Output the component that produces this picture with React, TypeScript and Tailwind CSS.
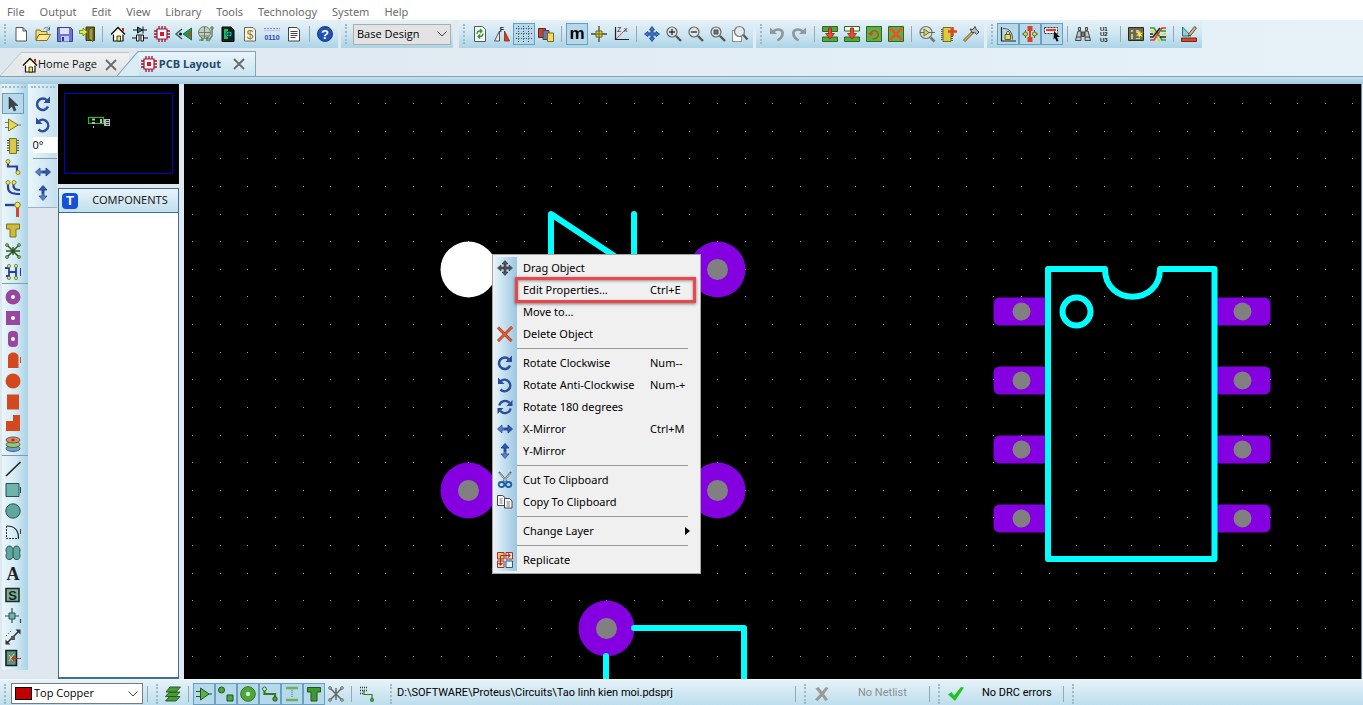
import { Fragment } from "react";
import type { ReactNode } from "react";
import clsx from "clsx";

// All glyphs are drawn on a 16x16 grid.
const icons: Record<string, ReactNode> = {
  newFile: (
    <path d="M3 1.5h7l3.5 3.5v10H3zM10 1.5V5h3.5" fill="#fff" stroke="#555" />
  ),
  open: (
    <>
      <path d="M1 4h4l1 1.500h6v3H4L1 14z" fill="#f3dd7a" stroke="#8a6d1a" />
      <path d="M4 8.500h11.500L12 14.500H1z" fill="#ffe98f" stroke="#8a6d1a" />
      <path d="M8.500 3c2-2 4-2 5.500 0M14.500 1v3h-3" fill="none" stroke="#3d6f9c" />
    </>
  ),
  save: (
    <>
      <path d="M.5 1.500h13l2 2v12H.5z" fill="#6d75d2" stroke="#3a4190" />
      <path d="M3 2h9v6H3z" fill="#dfe3fa" />
      <path d="M4 10h8v5.500H4z" fill="#c3c8f0" />
      <path d="M5 11h2v4H5z" fill="#333a80" />
    </>
  ),
  exit: (
    <>
      <path d="M7 1h8.500v13.500H7z" fill="#6b6b2a" stroke="#3a3a12" />
      <path d="M10 3l4-1.500v14L10 13z" fill="#a89a3a" stroke="#3a3a12" strokeWidth=".7" />
      <path d="M.5 4.500H4V2l4.500 4L4 10V7.500H.5z" fill="#e6ee3a" stroke="#5c7a18" strokeWidth=".8" />
    </>
  ),
  home: (
    <>
      <path d="M3.500 7.500h9.500v7.500H3.500z" fill="#fff" stroke="#111" strokeWidth="1.200" />
      <path d="M1 8.500 8 1.500l7 7" fill="#fffbe0" stroke="#111" strokeWidth="1.400" />
      <path d="M12 2h2v4l-2-2z" fill="#c22" />
      <path d="M7 10h3.500v5H7z" fill="#f3e93c" stroke="#111" strokeWidth=".8" />
    </>
  ),
  schematic: (
    <>
      <path d="M1 4h14" stroke="#111" />
      <path d="M5.500 1v6l5-3z" fill="#2e7a9c" stroke="#111" />
      <path d="M11 .5v7M0 12h5M11 12h5M8 8v1" stroke="#111" fill="none" />
      <path d="M4.500 9h2.500v6H4.500zM9 9h2.500v6H9z" fill="#fff" stroke="#111" />
    </>
  ),
  chip: (
    <>
      <path
        d="M5 0v16M8 0v16M11 0v16M0 5h16M0 8h16M0 11h16"
        stroke="#a3102a"
        strokeWidth="1.300"
      />
      <path d="M3 3h10v10H3z" fill="#fff" stroke="#a3102a" strokeWidth="1.200" />
      <path d="M6 6h4v4H6z" fill="#e0142c" />
    </>
  ),
  viewer3d: (
    <>
      <path d="M15.500 2v12L7 8z" fill="#1f9a4a" stroke="#15542c" strokeWidth=".8" />
      <path d="M15 5v6l-3-3z" fill="#d8322a" />
      <path d="M6 3 0 8l6 5M3 8h3" fill="none" stroke="#2a5f56" strokeWidth="1.400" />
      <circle cx="4.500" cy="8" r="1.600" fill="#222" />
    </>
  ),
  gerber: (
    <>
      <circle cx="6.500" cy="6.500" r="6" fill="#c0cfbd" stroke="#6c8069" />
      <path d="M1 6.500h11M6.500 1v11M1.500 10h10" stroke="#6c8069" />
      <path d="M14 2v8l-3 4M9 11v4M4 12v3M1 14h5" stroke="#4f6b4b" fill="none" strokeWidth="1.200" />
      <circle cx="14" cy="2" r="1.400" fill="#8fa68b" stroke="#4f6b4b" strokeWidth=".6" />
      <circle cx="10.500" cy="13.500" r="1.600" fill="#8fa68b" stroke="#4f6b4b" strokeWidth=".6" />
    </>
  ),
  explorer: (
    <>
      <path d="M2 1h9l3 3v11.500H2z" fill="#0c2a1a" stroke="#000" />
      <path d="M4 3h4v10H4z" fill="#1dbb5a" />
      <circle cx="9" cy="8" r="3" fill="#23d5e0" stroke="#000" strokeWidth=".6" />
      <path d="M7 8h4M9 5v6" stroke="#000" strokeWidth=".8" />
    </>
  ),
  bill: (
    <>
      <path d="M2.500 1.500H11l2.500 2.500v11h-11z" fill="#f7f4e2" stroke="#666" />
      <text x="8" y="12.500" textAnchor="middle" fontSize="12" fill="#8c7a24">
        $
      </text>
    </>
  ),
  source: (
    <>
      <path d="M0 2.500h16" stroke="#9a7ac0" strokeDasharray="2 1" />
      <path d="M0 4.500h16" stroke="#b8c4e6" />
      <text x="8" y="14" textAnchor="middle" fontSize="7" fontWeight="bold" fill="#3842a8">
        0110
      </text>
    </>
  ),
  notes: (
    <>
      <path d="M2.500 1.500H11l2.500 2.500v11h-11z" fill="#fff" stroke="#444" />
      <path d="M4.500 5.500h7M4.500 7.500h7M4.500 9.500h7M4.500 11.500h5" stroke="#444" />
    </>
  ),
  help: (
    <>
      <circle cx="8" cy="8" r="7.500" fill="#2151b5" stroke="#173a86" />
      <text x="8" y="12.500" textAnchor="middle" fontSize="13" fontWeight="bold" fill="#fff">
        ?
      </text>
    </>
  ),
  redraw: (
    <>
      <path d="M2.500.5h8l3 3v12h-11z" fill="#f6fbf6" stroke="#555" />
      <path
        d="M5 8c0-2 1-3 3-3h1.500M8 3l2 2-2 2M11 7.500c0 2-1 3-3 3H6.500M8 12.500l-2-2 2-2"
        fill="none"
        stroke="#2c9a33"
        strokeWidth="1.300"
      />
    </>
  ),
  mirror: (
    <>
      <path d="M5.500 5v10H.5z" fill="#e9eef0" stroke="#555" />
      <path d="M10.500 5v10h5z" fill="#dd3d22" stroke="#8a2412" strokeWidth=".8" />
      <text x="8" y="6" textAnchor="middle" fontSize="7" fontWeight="bold" fill="#222">
        F
      </text>
    </>
  ),
  grid: (
    <path
      d="M0 2.500h16M0 7.500h16M0 12.500h16M2.500 0v16M7.500 0v16M12.500 0v16"
      stroke="#345"
      strokeDasharray="1 1.500"
    />
  ),
  layers: (
    <>
      <path d="M.5 2.500h7v9h-7z" fill="#c9472a" stroke="#6b2313" />
      <path d="M5 4.500h6v9H5z" fill="#6f79a8" stroke="#3d4468" />
      <path d="M9.500 7h6v8.500h-6z" fill="#f0dc5e" stroke="#7a6a1c" />
    </>
  ),
  metric: (
    <text x="8" y="13" textAnchor="middle" fontSize="17" fontWeight="bold" fill="#000">
      m
    </text>
  ),
  origin: (
    <>
      <path d="M0 8h16M8 0v16" stroke="#444" strokeWidth="1.300" />
      <path d="M5 5h6v6H5z" fill="#dfd43a" stroke="#6b6414" />
      <path d="M8 5v6M5 8h6" stroke="#6b6414" />
    </>
  ),
  polar: (
    <>
      <path d="M2.500 1v12.500H16" fill="none" stroke="#222" strokeWidth="1.200" />
      <path d="m3 13 9-9" stroke="#d34545" />
      <text x="4" y="6" fontSize="7" fill="#222">
        Z
      </text>
      <text x="11" y="6" fontSize="7" fill="#222">
        x
      </text>
    </>
  ),
  pan: (
    <path
      d="M8 .5 10.500 4H9v3h3V5.500L15.500 8 12 10.500V9H9v3h1.500L8 15.500 5.500 12H7V9H4v1.500L.5 8 4 5.500V7h3V4H5.500z"
      fill="#3f7fd6"
      stroke="#173e86"
      strokeWidth=".9"
    />
  ),
  zoomIn: (
    <>
      <circle cx="6" cy="6" r="5" fill="#dfe6ea" stroke="#666" strokeWidth="1.200" />
      <path d="m10 10 5 5" stroke="#555" strokeWidth="2.400" />
      <path d="M3 6h6M6 3v6" stroke="#333" strokeWidth="1.400" />
    </>
  ),
  zoomOut: (
    <>
      <circle cx="6" cy="6" r="5" fill="#dfe6ea" stroke="#666" strokeWidth="1.200" />
      <path d="m10 10 5 5" stroke="#555" strokeWidth="2.400" />
      <path d="M3 6h6" stroke="#333" strokeWidth="1.400" />
    </>
  ),
  zoomAll: (
    <>
      <circle cx="6" cy="6" r="5" fill="#dfe6ea" stroke="#666" strokeWidth="1.200" />
      <path d="m10 10 5 5" stroke="#555" strokeWidth="2.400" />
      <path d="M4 4h4v4H4z" fill="#777" stroke="#333" strokeWidth=".8" />
    </>
  ),
  zoomArea: (
    <>
      <path d="M.5 4.500h9v11h-9z" fill="#fff" stroke="#333" strokeDasharray="1 1" />
      <circle cx="7.500" cy="5.500" r="5" fill="#e5ebee" stroke="#777" strokeWidth="1.200" />
      <path d="m11.500 9 4 4.500" stroke="#555" strokeWidth="2.200" />
    </>
  ),
  undo: (
    <>
      <path d="M4 5.500c5-4 10.500-1.500 9.500 3-.5 2.500-2.500 4.500-5 6" fill="none" stroke="#8e989e" strokeWidth="2.600" />
      <path d="M1 1.500V8h7z" fill="#8e989e" />
    </>
  ),
  redo: (
    <>
      <path d="M12 5.500C7 1.500 1.500 4 2.500 8.500c.5 2.500 2.500 4.500 5 6" fill="none" stroke="#8e989e" strokeWidth="2.600" />
      <path d="M15 1.500V8H8z" fill="#8e989e" />
    </>
  ),
  blockCopy: (
    <>
      <path d="M.5.500h15v5H.5zM.5 11h15v4.500H.5z" fill="#53a53e" stroke="#2c6b1e" />
      <path d="M6.500 2h3v5.500h3L8 13 3.500 7.500h3z" fill="#ee4a2a" stroke="#8f2410" strokeWidth=".8" />
    </>
  ),
  blockMove: (
    <>
      <path d="M.5.500h15v4.500H.5z" fill="#f4faf2" stroke="#2c6b1e" />
      <path d="M.5 11h15v4.500H.5z" fill="#53a53e" stroke="#2c6b1e" />
      <path d="M6.500 2h3v5.500h3L8 13 3.500 7.500h3z" fill="#ee4a2a" stroke="#8f2410" strokeWidth=".8" />
    </>
  ),
  blockRotate: (
    <>
      <path d="M.5.500h15v15H.5z" fill="#5fae45" stroke="#2c6b1e" />
      <path d="M4.500 7.500a4 4 0 1 1 2 4.800" fill="none" stroke="#b8501e" strokeWidth="1.400" />
      <path d="m2 7 5.500-.5-2.500 4z" fill="#e0451f" />
    </>
  ),
  blockDelete: (
    <>
      <path d="M.5.500h15v15H.5z" fill="#5fae45" stroke="#2c6b1e" />
      <path d="m2 2 12 12M14 2 2 14" stroke="#e8552c" strokeWidth="2.800" />
    </>
  ),
  pick: (
    <>
      <circle cx="7" cy="6.500" r="6" fill="#d9e3da" stroke="#777" strokeWidth="1.200" />
      <path d="M1 6.500h15" stroke="#667026" />
      <path d="M5 3v7l5-3.500z" fill="#d2d46a" stroke="#667026" />
      <path d="m11.500 11.500 4 4" stroke="#777" strokeWidth="2.600" />
    </>
  ),
  makePackage: (
    <>
      <path d="M1 3v12M11 8v8" stroke="#555" strokeDasharray="1 1" strokeWidth="2" />
      <path d="M2 1.500h8v14H2z" fill="#dccb3f" stroke="#7a6c16" />
      <path d="M11.500 1v9M7 5.500h9" stroke="#e04424" strokeWidth="2.600" />
    </>
  ),
  hammer: (
    <>
      <path d="M1 15 10 6" stroke="#7c5a2c" strokeWidth="3" />
      <path d="M1.500 14.500 9.500 6.500" stroke="#e5b264" strokeWidth="1.200" />
      <path d="m7 3 3 .5L12 .5l1.500 3.500 2.500 2-2.500 2.500-2-2.500-2 1z" fill="#b9c2c8" stroke="#333" strokeWidth=".9" />
    </>
  ),
  lockAngle: (
    <>
      <path d="M1.500 1v14H16" fill="none" stroke="#222" strokeWidth="1.200" />
      <path d="M3 2.500c7 0 9.500 4 9.500 11" fill="none" stroke="#555" />
      <path d="M5 8.500h5.500v5H5z" fill="#e8df45" stroke="#66601a" />
      <path d="M6.500 8V6.500c0-1.500 3-1.500 3 0V8" fill="none" stroke="#66601a" />
    </>
  ),
  autoNeck: (
    <>
      <path d="M5.500 0h5v5h-5zM5.500 11h5v5h-5zM7 5h2v6H7z" fill="#dd4020" />
      <circle cx="3.500" cy="8" r="2" fill="#d9e06a" stroke="#556b22" />
      <circle cx="12.500" cy="8" r="2" fill="#d9e06a" stroke="#556b22" />
      <path d="M0 8h1.500M14.500 8H16M3.500 4v2M12.500 4v2M3.500 10v2M12.500 10v2" stroke="#556b22" />
    </>
  ),
  selectTag: (
    <>
      <path d="M.5 1.500h13v6H.5z" fill="#f2f6f8" stroke="#333" strokeDasharray="2 1" />
      <path d="M2 4h10" stroke="#e03c2c" strokeWidth="2.200" />
      <path d="m10 5 6 6h-3l1.500 4-2 .5L11 12l-1.500 1.500z" fill="#111" />
    </>
  ),
  find: (
    <>
      <path d="M3.500 1.500h2v3h-2zM10.500 1.500h2v3h-2z" fill="#ccc" stroke="#444" />
      <path d="M3 5 .5 14.500h5.500V5zM13 5l2.500 9.500H10V5z" fill="#c3c8cb" stroke="#444" />
      <path d="M6.500 6h3v4.500h-3zM1 11h5M10 11h5" fill="#777" stroke="#444" />
    </>
  ),
  annotate: (
    <g fontSize="6" fontWeight="bold" fill="#111">
      <text x="3" y="4.500">
        U1
      </text>
      <text x="3" y="10">
        U2
      </text>
      <text x="3" y="15.500">
        U3
      </text>
    </g>
  ),
  autoplace: (
    <>
      <path d="M.5 1.500h15v13H.5z" fill="#6c6a4d" stroke="#2b2a1c" />
      <path d="M3 4h2v2H3zM3 8h2v5H3zM8 4h3v3H8z" fill="#c8c6a0" />
      <path d="m12 4 .5 3 3-.5-2.500 2 2 2.500-3-1-1 3-.5-3.500-3 .5 2.500-2-1.500-2.500 2.500 1z" fill="#f6e452" />
      <path d="M8 12.500h4" stroke="#c8c6a0" />
    </>
  ),
  autoroute: (
    <g fill="none" strokeWidth="1.600">
      <path d="M0 2h4l8 12h4" stroke="#2e9d34" />
      <path d="M0 5h3l7 11" stroke="#e0d22f" />
      <path d="M0 14h4l8-12h4" stroke="#d8362a" />
      <path d="M0 11h3l7-9M0 8h3M10 11h6" stroke="#222" />
      <path d="M11 5h5" stroke="#2e9d34" />
      <path d="M12 8h4" stroke="#e0d22f" />
    </g>
  ),
  design: (
    <>
      <path d="M1.500 1v9H10z" fill="#8fd0d4" stroke="#2b7076" />
      <path d="m8 7.500 5.500-7 2 1.500L10 9l-2.500 1z" fill="#d9b88a" stroke="#5c4020" strokeWidth=".9" />
      <path d="M.5 12h15v3.500H.5z" fill="#cf4a2c" stroke="#7d2413" />
    </>
  ),
  arrow: <path d="M4 1v12l3-3 2 5 2-1-2-4.500h4z" fill="#3b4248" stroke="#222" strokeWidth=".5" />,
  component: (
    <>
      <path d="M0 5.500h4M0 10.500h4M12 8h4" stroke="#777" />
      <path d="M3.500 2v12L13 8z" fill="#e6d94c" stroke="#7b7220" />
    </>
  ),
  pkg: (
    <>
      <path d="M2 2.500h12M2 5h12M2 7.500h12M2 10h12M2 12.500h12" stroke="#444" />
      <path d="M4.500.500h7v15h-7z" fill="#d9c849" stroke="#7b7220" />
    </>
  ),
  track: (
    <>
      <path d="M3 4v3.500h9V13" fill="none" stroke="#2a3f9a" strokeWidth="2.200" />
      <circle cx="3" cy="2.500" r="2" fill="#eee85c" stroke="#8a8424" />
      <circle cx="13" cy="13.500" r="2" fill="#eee85c" stroke="#8a8424" />
    </>
  ),
  bus: (
    <>
      <path d="M3 3v4c0 5 3 7 12 7M8.500 3v3c0 2 2 4 6.500 4" fill="none" stroke="#2a3f9a" strokeWidth="2.200" />
      <circle cx="3" cy="2.500" r="2" fill="#eee85c" stroke="#8a8424" />
      <circle cx="9" cy="2.500" r="2" fill="#eee85c" stroke="#8a8424" />
    </>
  ),
  via: (
    <>
      <path d="M0 4h10" stroke="#2a3f9a" strokeWidth="2.400" />
      <path d="M12.500 6v10" stroke="#d8432a" strokeWidth="3" />
      <circle cx="12.500" cy="4" r="2.800" fill="#eee85c" stroke="#8a8424" />
    </>
  ),
  zone: <path d="M1.500 2h13v5H11v8H5V7H1.500z" fill="#ccbb3c" stroke="#7b7220" />,
  ratsnest: (
    <>
      <path d="m2 2 12 12M14 2 2 14M1 8h14M8 4v8" stroke="#2b5a20" strokeWidth="1.500" />
      <g fill="#8cc06f" stroke="#2b5a20" strokeWidth=".7">
        <circle cx="2" cy="2" r="1.500" />
        <circle cx="14" cy="2" r="1.500" />
        <circle cx="2" cy="14" r="1.500" />
        <circle cx="14" cy="14" r="1.500" />
      </g>
    </>
  ),
  connect: (
    <>
      <path d="M4 3v10M11 3v10M4 8h7M0 4h4M1 12h3" stroke="#2a3f9a" strokeWidth="1.800" />
      <path d="M15.500 4v8" stroke="#2a3f9a" />
      <g fill="#e2e46c" stroke="#5f7a2a" strokeWidth=".8">
        <circle cx="4" cy="2" r="1.600" />
        <circle cx="11" cy="2" r="1.600" />
        <circle cx="4" cy="14" r="1.600" />
        <circle cx="11" cy="14" r="1.600" />
      </g>
    </>
  ),
  padRound: (
    <>
      <circle cx="8" cy="8" r="7.500" fill="#98479f" />
      <circle cx="8" cy="8" r="2" fill="#fff" />
    </>
  ),
  padSquare: (
    <>
      <path d="M1 1h14v14H1z" fill="#98479f" />
      <circle cx="8" cy="8" r="2" fill="#fff" />
    </>
  ),
  padDil: (
    <>
      <rect x="3" y="0" width="10" height="16" rx="4" fill="#98479f" />
      <circle cx="8" cy="8" r="2" fill="#fff" />
    </>
  ),
  padEdge: (
    <>
      <path d="M3 16V5c0-6 10.500-6 10.500 0v11z" fill="#d3481f" />
      <path d="M15.500 5v6" stroke="#d3481f" />
    </>
  ),
  padSmdRound: <circle cx="8" cy="8" r="7.500" fill="#d3481f" />,
  padSmd: <path d="M2 .5h12v15H2z" fill="#d3481f" />,
  padPoly: <path d="M8 0h7v16H1V6h7z" fill="#d3481f" />,
  padStack: (
    <g stroke="#444" strokeWidth=".8">
      <ellipse cx="8" cy="12.500" rx="7" ry="3" fill="#6f9fd6" />
      <ellipse cx="8" cy="8.500" rx="7" ry="3" fill="#8fcf6a" />
      <ellipse cx="8" cy="4" rx="7" ry="3" fill="#f0825a" />
      <ellipse cx="8" cy="4" rx="1.500" ry=".8" fill="#b03a20" />
    </g>
  ),
  line: <path d="M1 15 15.500 1" stroke="#222" strokeWidth="1.600" />,
  box: (
    <>
      <path d="M1 1.500h13v13H1z" fill="#6db5ac" stroke="#2c4f55" />
      <path d="M15.500 5v6" stroke="#345" />
    </>
  ),
  disc: <circle cx="8" cy="8" r="7.200" fill="#5fa79c" stroke="#2c4f55" />,
  arc: (
    <>
      <path d="M1.500 2v12.500H14" fill="none" stroke="#333" strokeDasharray="2 1" />
      <path d="M2 2c7 0 11.500 4 11.500 12" fill="none" stroke="#222" strokeWidth="1.200" />
      <path d="M15.500 5v5" stroke="#345" />
    </>
  ),
  path: (
    <path
      d="M8 4C6-1 1 1 1 5c0 2 1 3 1 3s-1 1-1 3c0 4 5 5 7 1 2 4 7 3 7-1 0-2-.5-3-.5-3S15 7 15 5c0-4-5-6-7-1zM8 4v8"
      fill="#5fa79c"
      stroke="#2c4f55"
    />
  ),
  symbol: (
    <>
      <path d="M1 1.500h13v13H1z" fill="#7fae9a" stroke="#1d2b28" strokeWidth="1.600" />
      <text x="7.500" y="12.500" textAnchor="middle" fontSize="13" fontWeight="bold" fill="#16221f">
        S
      </text>
    </>
  ),
  marker: (
    <>
      <path d="M0 8h14M7 0v15M15.500 11v4" stroke="#2c4f55" strokeWidth="1.200" />
      <path d="M4 5h6v6H4z" fill="#6db5ac" stroke="#2c4f55" />
    </>
  ),
  dimension: (
    <>
      <path d="M2 14 14 2" stroke="#333" strokeWidth="1.600" />
      <path d="M15.500.500v5l-5-5zM.5 15.500v-5l5 5z" fill="#333" />
      <path d="m1 7 6-6" stroke="#333" strokeDasharray="1 2" />
      <path d="M6 7h4v4H6z" fill="#555" />
    </>
  ),
  roomIn: (
    <>
      <path d="M1 .5h10.500v15H1z" fill="#5f9484" stroke="#16221f" strokeWidth="1.600" />
      <path d="m4 11 5-7M4 5l4 6" stroke="#e8d75a" />
      <path d="M16 8.500H7M9.500 6 7 8.500 9.500 11" fill="none" stroke="#d8242c" strokeWidth="1.200" />
    </>
  ),
  rotateCw: (
    <>
      <path d="M13 10.500a5.700 5.700 0 1 1-1-6" fill="none" stroke="#2d4d99" strokeWidth="2.500" />
      <path d="M15 .5V7H8.500z" fill="#2d4d99" />
    </>
  ),
  rotateCcw: (
    <>
      <path d="M4 4a5.700 5.700 0 1 1-.5 8.500" fill="none" stroke="#2d4d99" strokeWidth="2.500" />
      <path d="M1 .5V7h6.500z" fill="#2d4d99" />
    </>
  ),
  rotate180: (
    <>
      <path d="M2.300 6.500A5.800 5.800 0 0 1 12.500 4M13.700 9.500A5.800 5.800 0 0 1 3.500 12" fill="none" stroke="#2d4d99" strokeWidth="2.300" />
      <path d="M15.500 1v6h-6zM.5 15V9h6z" fill="#2d4d99" />
    </>
  ),
  flipX: (
    <>
      <path d="M.5 8 5 4v3h3v2H5v3z" fill="#5f7fc4" stroke="#3a569c" strokeWidth=".9" />
      <path d="M8 7h3V4l4.500 4-4.500 4V9H8z" fill="#2d58b0" stroke="#223f86" strokeWidth=".9" />
    </>
  ),
  flipY: (
    <>
      <path d="M9 8v3h3l-4 4.500L4 11h3V8z" fill="#5f7fc4" stroke="#3a569c" strokeWidth=".9" />
      <path d="M8 .5 12 5H9v3H7V5H4z" fill="#2d58b0" stroke="#223f86" strokeWidth=".9" />
    </>
  ),
  drag: (
    <path
      d="M8 .5 11 4H9v3h3V5l3.500 3-3.500 3V9H9v3h2l-3 3.500L5 12h2V9H4v2L.5 8 4 5v2h3V4H5z"
      fill="#4c5257"
      stroke="#2e3235"
      strokeWidth=".6"
    />
  ),
  cross: (
    <>
      <path d="M1 1.500 14.500 15M15 1 1 15" stroke="#8f2a12" strokeWidth="2.800" />
      <path d="M1 1.500 14.500 15M15 1 1 15" stroke="#ec5a2e" strokeWidth="1.800" />
    </>
  ),
  cut: (
    <>
      <path d="M2 0l8 10M14 0 6 10" stroke="#555" strokeWidth="2" />
      <path d="M2.500.8l7 8.700M13.500.8l-7 8.700" stroke="#e8eef2" strokeWidth=".8" />
      <g fill="none" stroke="#1d5fa8" strokeWidth="1.800">
        <ellipse cx="4.500" cy="12.500" rx="2.800" ry="2.500" />
        <ellipse cx="11.500" cy="12.500" rx="2.800" ry="2.500" />
      </g>
    </>
  ),
  copy: (
    <>
      <path d="M.5 1.500h5l2.500 2v8H.5z" fill="#fff" stroke="#444" />
      <path d="M2.500 5h3M2.500 7h3M2.500 9h3" stroke="#777" />
      <path d="M7.500 4.500h5l2.500 2.500v7H7.500z" fill="#fff" stroke="#444" />
      <path d="M9.500 8h3.500M9.500 10h3.500M9.500 12h3.500" stroke="#777" />
    </>
  ),
  replicate: (
    <>
      <path d="M.5.500h6.500v6.500H.5z" fill="#f1c86a" stroke="#933" />
      <path d="M9 .5h6.500v6.500H9z" fill="#fbe5cf" stroke="#933" />
      <path d="M.5 9h6.500v6.500H.5z" fill="#fbe5cf" stroke="#933" />
      <path d="M9 9h6.500v6.500H9z" fill="#dff1fa" stroke="#345a70" />
      <path d="M3.500 3.500H13M11 1.500l2 2-2 2M3.500 3.500V13M1.500 11l2 2 2-2" fill="none" stroke="#c8281c" strokeWidth="1.200" />
    </>
  ),
  stack: (
    <g fill="#4a9a3a" stroke="#23541b" strokeWidth=".9">
      <path d="m.5 15 4-4.500H15L11 15z" />
      <path d="m.5 10.500 4-4.500H15l-4 4.500z" />
      <path d="m1 6 4-5h10.500L11 6z" />
    </g>
  ),
  fComponent: (
    <>
      <path d="M0 5.500h4M0 10.500h4M12 8h4" stroke="#23541b" />
      <path d="M4.500 2v12L13 8z" fill="#5fb04a" stroke="#23541b" />
    </>
  ),
  fGraphics: (
    <g fill="#4fa53c" stroke="#23541b">
      <circle cx="3.500" cy="4" r="3" />
      <path d="M9 9h6v6H9z" />
    </g>
  ),
  fPad: (
    <>
      <circle cx="8" cy="8" r="7.300" fill="#4fa53c" stroke="#2f7d20" />
      <circle cx="8" cy="8" r="2.200" fill="#d6ecd0" />
    </>
  ),
  fTrack: (
    <>
      <path d="M2.500 4v4H13v4.500" fill="none" stroke="#2f7d20" strokeWidth="2.200" />
      <circle cx="2.500" cy="3" r="2" fill="#cfe8c8" stroke="#2f7d20" />
      <circle cx="13" cy="13" r="2.200" fill="#4fa53c" stroke="#23541b" />
    </>
  ),
  fVia: (
    <>
      <path d="M2 2h12M2 14h12" stroke="#6fae5e" strokeWidth="2.400" />
      <path d="M8 4v8" stroke="#2f7d20" strokeDasharray="1 1" />
    </>
  ),
  fZone: <path d="M1.500 1.500h13V6H11v9H5V6H1.500z" fill="#3f9a2e" stroke="#23541b" />,
  fRats: (
    <>
      <path d="m2 2 12 12M14 2 2 14M8 2v12" stroke="#666" strokeWidth="1.500" />
      <g fill="#bbb" stroke="#555" strokeWidth=".7">
        <circle cx="2" cy="2" r="1.400" />
        <circle cx="14" cy="2" r="1.400" />
        <circle cx="2" cy="14" r="1.400" />
        <circle cx="14" cy="14" r="1.400" />
      </g>
    </>
  ),
  fNet: (
    <>
      <path d="M1 1.500h7M1 4.500h7M1 7.500h4" fill="none" stroke="#333" strokeDasharray="1 1" strokeWidth="1.400" />
      <path d="M5 4v4.500h8V13" fill="none" stroke="#2f7d20" strokeWidth="1.200" />
      <circle cx="13" cy="14" r="1.700" fill="#4fa53c" stroke="#23541b" strokeWidth=".6" />
    </>
  ),
  noNet: (
    <path d="m1.500 2.500 3-1.500L8 5.500 12 1l2.500 1L10 8l4 5.500-2.500 1.500L8 10.500 3.500 15 1 13.500 6 8z" fill="#9a9a9a" />
  ),
  ok: <path d="M0 8.500 3.500 6 6 9.500 13 1l3 .5L7 15z" fill="#22c422" />,
};

type IconName = keyof typeof icons;

function Icon({ name }: { name: IconName }) {
  return (
    <svg
      viewBox="0 0 16 16"
      className="size-4 shrink-0 overflow-visible font-['Liberation_Sans',Arial,sans-serif]"
      aria-hidden="true"
    >
      {icons[name]}
    </svg>
  );
}

function ToolButton({
  name,
  on = false,
  className,
}: {
  name: IconName;
  on?: boolean;
  className?: string;
}) {
  return (
    <button
      type="button"
      aria-label={name}
      aria-pressed={on}
      className={clsx(
        "flex w-[22px] shrink-0 items-center justify-center",
        on && "border border-[#6a9fbe] bg-[#b5d8eb]",
        className,
      )}
    >
      <Icon name={name} />
    </button>
  );
}

const Grip = () => (
  <div className="mx-1 h-5 w-0.5 shrink-0 border-l-2 border-dotted border-[#9fb9c6]" />
);

const Divider = () => (
  <div className="flex w-[9px] shrink-0 justify-center">
    <div className="h-4 w-px bg-[#94a9b5]" />
  </div>
);

function Toolbar({ groups, pressed = [] }: { groups: IconName[][]; pressed?: IconName[] }) {
  return (
    <div className="flex h-7 shrink-0 items-center bg-linear-to-b from-[#e6f1f7] via-[#cfe6f2] to-[#abd4e6] pr-0.5">
      <Grip />
      {groups.map((group, i) => (
        <Fragment key={i}>
          {i > 0 && <Divider />}
          {group.map((name) => (
            <ToolButton key={name} name={name} on={pressed.includes(name)} className="h-[22px]" />
          ))}
        </Fragment>
      ))}
    </div>
  );
}

const menus = ["File", "Output", "Edit", "View", "Library", "Tools", "Technology", "System", "Help"];

const fileTools: IconName[][] = [
  ["newFile", "open", "save", "exit"],
  ["home", "schematic", "chip", "viewer3d", "gerber", "explorer", "bill", "source", "notes"],
  ["help"],
];
const viewTools: IconName[][] = [
  ["redraw", "mirror", "grid", "layers"],
  ["metric", "origin", "polar"],
  ["pan", "zoomIn", "zoomOut", "zoomAll", "zoomArea"],
];
const editTools: IconName[][] = [
  ["undo", "redo"],
  ["blockCopy", "blockMove", "blockRotate", "blockDelete"],
  ["pick", "makePackage", "hammer"],
];
const designTools: IconName[][] = [
  ["lockAngle", "autoNeck", "selectTag"],
  ["find", "annotate"],
  ["autoplace", "autoroute"],
  ["design"],
];
const modeTools: IconName[][] = [
  ["arrow", "component", "pkg", "track", "bus", "via", "zone", "ratsnest", "connect"],
  ["padRound", "padSquare", "padDil", "padEdge", "padSmdRound", "padSmd", "padPoly", "padStack"],
  ["line", "box", "disc", "arc", "path", "text", "symbol", "marker", "dimension", "roomIn"],
];
const filterTools: IconName[] = ["fComponent", "fGraphics", "fPad", "fTrack", "fVia", "fZone"];

function Chevron() {
  return (
    <svg
      viewBox="0 0 10 6"
      className="pointer-events-none absolute top-1/2 right-1 h-1.5 w-2.5 -translate-y-1/2"
      aria-hidden="true"
    >
      <path d="m.5.500 4.500 4.500 4.500-4.500" fill="none" stroke="#444" />
    </svg>
  );
}

function Tab({ icon, title, active = false }: { icon: IconName; title: string; active?: boolean }) {
  return (
    <div className={clsx("flex text-[11px]", active ? "-ml-3 h-[25px]" : "h-6")}>
      <svg viewBox="0 0 22 24" preserveAspectRatio="none" className="h-full w-[22px] shrink-0" aria-hidden="true">
        <path d="M0 24 20 1.500Q21 .5 22 .5V24z" fill={active ? "#d9ebf5" : "#e6e8ea"} />
        <path d="M0 24 20 1.500Q21 .5 22 .5" fill="none" stroke={active ? "#7fa5bb" : "#bcc6cc"} />
      </svg>
      <div
        className={clsx(
          "flex items-center border-t",
          active
            ? "gap-0.5 border-r border-[#7fa5bb] bg-linear-to-b from-[#e9f4fa] to-[#cbe4f1] pr-2.5 pl-0.5 font-bold text-[#1f4a6b]"
            : "border-[#bcc6cc] bg-linear-to-b from-[#f1f1f1] to-[#dfe2e4] pr-3 text-[#111]",
        )}
      >
        <Icon name={icon} />
        <a href="#" className="whitespace-nowrap">
          {title}
        </a>
        <button type="button" aria-label={`Close ${title}`} className={active ? "ml-2.5" : "ml-2"}>
          <svg viewBox="0 0 12 12" className="size-3" aria-hidden="true">
            <path d="m1 1 10 10M11 1 1 11" stroke="#6a6a6a" strokeWidth="1.800" />
          </svg>
        </button>
      </div>
    </div>
  );
}

function Overview() {
  return (
    <svg className="h-[100px] w-full shrink-0 bg-black" aria-label="Board overview">
      <rect x="6.500" y="9.500" width="108" height="80" fill="none" stroke="#0000c8" />
      <rect x="30.500" y="33.500" width="15" height="6" fill="none" stroke="#00d800" />
      <path d="M34 34.500h3v2h-3zM34 38h3v2h-3zM35 42h1v2h-1zM42 35h2v4h-2zM46 35h6v7h-6z" fill="#bbb" />
      <path d="M48 36.500h3M48 38.500h3M48 40.500h3" stroke="#333" />
    </svg>
  );
}

const gridPitch = 27.63;
const dots = Array.from({ length: 100 * 50 }, (_, n) => ({
  x: 8 + Math.round((n % 100) * gridPitch),
  y: 19 + Math.round(Math.floor(n / 100) * gridPitch),
}));

const roundPads = [
  { x: 533.5, y: 185.5 },
  { x: 284.5, y: 406.5 },
  { x: 533.5, y: 406.5 },
  { x: 422.5, y: 544.5 },
];

const pinRows = [227.5, 296.5, 365.5, 434.5];

function Board() {
  return (
    <svg className="size-full" aria-label="PCB canvas">
      <path d={dots.map(({ x, y }) => `M${x} ${y}h1v1h-1z`).join("")} fill="#a8a8a8" />
      <circle cx="284.500" cy="185.500" r="28" fill="#fff" />
      {roundPads.map(({ x, y }) => (
        <g key={`${x}-${y}`}>
          <circle cx={x} cy={y} r="28" fill="#8400e0" />
          <circle cx={x} cy={y} r="10.500" fill="#808080" />
        </g>
      ))}
      {pinRows.map((y) => (
        <g key={y}>
          <rect x="809.500" y={y - 14} width="60" height="28" rx="6" fill="#8400e0" />
          <rect x="1027" y={y - 14} width="59.500" height="28" rx="6" fill="#8400e0" />
          <circle cx="837.500" cy={y} r="9" fill="#808080" />
          <circle cx="1058.500" cy={y} r="9" fill="#808080" />
        </g>
      ))}
      <path d="M864 185h56.500a27.500 28 0 0 0 55 0H1030v290H864z" fill="#000" />
      {dots
        .filter(({ x, y }) => x > 880 && x < 1025 && y > 200 && y < 470)
        .map(({ x, y }) => (
          <rect key={`${x}-${y}`} x={x} y={y} width="1" height="1" fill="#a8a8a8" />
        ))}
      <g fill="none" stroke="#00ffff" strokeWidth="6" strokeLinecap="round" strokeLinejoin="round">
        <path d="M367 185v-55l83 55v-55" />
        <path d="M450 544h110v300M422 572v300" />
        <path d="M864 185h57c0 37 55 37 55 0h54.500v290H864z" />
        <circle cx="892.500" cy="227.500" r="14" fill="#000" />
      </g>
    </svg>
  );
}

type MenuItem = { label: string; icon?: IconName; keys?: string; submenu?: boolean };

const contextMenu: MenuItem[][] = [
  [
    { label: "Drag Object", icon: "drag" },
    { label: "Edit Properties...", keys: "Ctrl+E" },
    { label: "Move to..." },
    { label: "Delete Object", icon: "cross" },
  ],
  [
    { label: "Rotate Clockwise", icon: "rotateCw", keys: "Num--" },
    { label: "Rotate Anti-Clockwise", icon: "rotateCcw", keys: "Num-+" },
    { label: "Rotate 180 degrees", icon: "rotate180" },
    { label: "X-Mirror", icon: "flipX", keys: "Ctrl+M" },
    { label: "Y-Mirror", icon: "flipY" },
  ],
  [
    { label: "Cut To Clipboard", icon: "cut" },
    { label: "Copy To Clipboard", icon: "copy" },
  ],
  [{ label: "Change Layer", submenu: true }],
  [{ label: "Replicate", icon: "replicate" }],
];

function ContextMenu() {
  return (
    <div
      role="menu"
      className="absolute top-[170px] left-[308px] w-[209px] border border-[#a5a5a5] bg-[#f0f0f0] p-0.5 font-['Noto_Sans',sans-serif] text-[11px] text-black"
    >
      <div className="bg-linear-to-r from-[#e2f1fa] to-[#9cc7e0] bg-[length:22px_100%] bg-no-repeat">
        {contextMenu.map((group, i) => (
          <Fragment key={i}>
            {i > 0 && (
              <div className="flex h-[7px] items-center pr-2.5 pl-[22px]">
                <div className="h-px w-full bg-[#9a9a9a]" />
              </div>
            )}
            {group.map(({ label, icon, keys, submenu }) => (
              <button
                key={label}
                type="button"
                role="menuitem"
                className="relative flex h-[22px] w-full items-center pl-0.5 text-left"
              >
                <span className="w-[26px]">{icon && <Icon name={icon} />}</span>
                <span className="w-[127px] whitespace-nowrap">{label}</span>
                <span className="whitespace-nowrap">{keys}</span>
                {submenu && (
                  <svg viewBox="0 0 5 8" className="mr-2 ml-auto h-2 w-[5px]" aria-hidden="true">
                    <path d="M0 0v8l5-4z" />
                  </svg>
                )}
                {label === "Edit Properties..." && (
                  <span className="absolute -top-0.5 right-0.5 h-[26px] w-[181px] border-3 border-[#e8484c] shadow-[0_1px_3px_rgba(0,0,0,0.5),inset_0_1px_3px_rgba(0,0,0,0.4)]" />
                )}
              </button>
            ))}
          </Fragment>
        ))}
      </div>
    </div>
  );
}

function ModeColumn() {
  return (
    <div className="ml-0.5 flex w-[26px] shrink-0 flex-col self-start bg-linear-to-r from-[#e9f6fb] via-[#d5ebf5] to-[#a9d3e6] pb-0.5">
      <div className="mt-0.5 mb-[5px] h-0.5 w-6 border-t-2 border-dotted border-[#9fb9c6]" />
      {modeTools.map((group, i) => (
        <Fragment key={i}>
          {i > 0 && <div className="mt-px mb-0.5 h-px bg-[#7f9cab]" />}
          {group.map((name) =>
            name === "text" ? (
              <button
                key={name}
                type="button"
                className="flex h-[21px] w-[22px] items-center justify-center font-['Liberation_Serif',serif] text-lg font-bold text-[#222]"
              >
                A
              </button>
            ) : (
              <ToolButton key={name} name={name} on={name === "arrow"} className="h-[21px]" />
            ),
          )}
        </Fragment>
      ))}
    </div>
  );
}

function OrientationColumn() {
  return (
    <div className="flex w-[29px] shrink-0 flex-col items-center self-start border-b border-[#9db4c0] bg-linear-to-r from-[#e9f6fb] to-[#c3e0ee] pb-1">
      <div className="mt-0.5 mb-[5px] h-0.5 w-6 border-t-2 border-dotted border-[#9fb9c6]" />
      <ToolButton name="rotateCw" className="h-[21px]" />
      <ToolButton name="rotateCcw" className="h-[21px]" />
      <input
        aria-label="Rotation angle"
        defaultValue="0°"
        className="my-0.5 ml-1 h-4 w-6 bg-white text-[11px] text-black"
      />
      <div className="mt-[3px] mb-0.5 ml-1 h-px w-6 bg-[#7f9cab]" />
      <ToolButton name="flipX" className="h-[21px]" />
      <ToolButton name="flipY" className="h-[21px]" />
    </div>
  );
}

function StatusBar() {
  return (
    <footer className="flex h-[26px] shrink-0 items-center overflow-hidden border-t border-[#eef6fa] bg-linear-to-b from-[#e6f2f8] to-[#bcdeed] pt-0.5 font-['Roboto',sans-serif] text-[11px] text-black">
      <Grip />
      <div className="relative ml-px flex h-[21px] w-[132px] shrink-0 items-center border border-[#7a7a7a] bg-white pl-[3px] font-['Open_Sans',sans-serif]">
        <span className="h-[13px] w-[17px] shrink-0 border border-black bg-[#c00000]" />
        <select aria-label="Layer" className="h-full w-full appearance-none pl-0.5 outline-none">
          <option>Top Copper</option>
        </select>
        <Chevron />
      </div>
      <Divider />
      <Grip />
      <ToolButton name="stack" className="h-[22px]" />
      <Divider />
      {filterTools.map((name) => (
        <ToolButton key={name} name={name} on className="h-[22px]" />
      ))}
      <ToolButton name="fRats" className="h-[22px]" />
      <Divider />
      <ToolButton name="fNet" className="mr-2 h-[22px]" />
      <Grip />
      <span className="w-[395px] shrink-0 pl-px whitespace-nowrap">
        D:\SOFTWARE\Proteus\Circuits\Tao linh kien moi.pdsprj
      </span>
      <Divider />
      <Grip />
      <span className="flex w-[115px] shrink-0 items-center gap-7 pl-1 text-[#8b8f92]">
        <Icon name="noNet" />
        <span className="whitespace-nowrap">No Netlist</span>
      </span>
      <Divider />
      <Grip />
      <span className="flex w-[115px] shrink-0 items-center gap-[18px] pl-1">
        <Icon name="ok" />
        <span className="whitespace-nowrap">No DRC errors</span>
      </span>
      <Divider />
      <Grip />
    </footer>
  );
}

export default function App() {
  return (
    <div className="flex h-screen flex-col overflow-hidden bg-linear-to-r from-[#dfe7ee] to-[#e6f2f8] font-['Open_Sans',sans-serif]">
      <nav className="flex h-5 shrink-0 items-end gap-px bg-white font-['Noto_Sans',sans-serif] text-[11px] leading-4 text-[#6b6b6b]">
        {menus.map((menu) => (
          <button key={menu} type="button" className="px-[7px]">
            {menu}
          </button>
        ))}
      </nav>

      <div className="flex h-7 shrink-0">
        <Toolbar groups={fileTools} />
        <div className="ml-[3px] flex shrink-0 items-center bg-linear-to-b from-[#e6f1f7] via-[#cfe6f2] to-[#abd4e6] pr-0.5">
          <Grip />
          <div className="relative ml-0.5 flex h-[21px] w-[98px]">
            <select
              aria-label="Design variant"
              className="w-full appearance-none border border-[#adadad] bg-[#e3e3e3] pl-[3px] text-[11px] text-black"
            >
              <option>Base Design</option>
            </select>
            <Chevron />
          </div>
        </div>
        <div className="ml-1.5 flex gap-[3px]">
          <Toolbar groups={viewTools} pressed={["grid", "metric"]} />
          <Toolbar groups={editTools} />
          <Toolbar groups={designTools} pressed={["lockAngle", "autoNeck", "selectTag"]} />
        </div>
      </div>

      <div className="flex h-7 shrink-0 items-end">
        <Tab icon="home" title="Home Page" />
        <Tab icon="chip" title="PCB Layout" active />
      </div>
      <div className="h-2 shrink-0 border-t border-[#7fa5bb] bg-linear-to-b from-[#c4e0ee] to-[#a3cbe0]" />

      <main className="flex min-h-0 flex-1">
        <ModeColumn />
        <OrientationColumn />
        <aside className="ml-px flex w-[121px] shrink-0 flex-col">
          <Overview />
          <section className="mt-1 flex flex-1 flex-col border border-b-2 border-[#3d7199] bg-white">
            <header className="flex h-6 items-center border-b border-[#3d7199] bg-linear-to-b from-[#e9f4fa] to-[#c0dfee] pl-[3px]">
              <button
                type="button"
                className="size-4 rounded-sm bg-[#1450d8] font-['Liberation_Sans',Arial,sans-serif] text-[13px] leading-4 font-bold text-white"
              >
                T
              </button>
              <h2 className="flex-1 pl-1 text-center font-['Noto_Sans',sans-serif] text-[11px] text-[#222]">
                COMPONENTS
              </h2>
            </header>
          </section>
        </aside>
        <div className="relative mr-px ml-[5px] min-w-0 flex-1 overflow-hidden border-r border-[#6f8a99] bg-black">
          <Board />
          <ContextMenu />
        </div>
      </main>

      <StatusBar />
    </div>
  );
}
